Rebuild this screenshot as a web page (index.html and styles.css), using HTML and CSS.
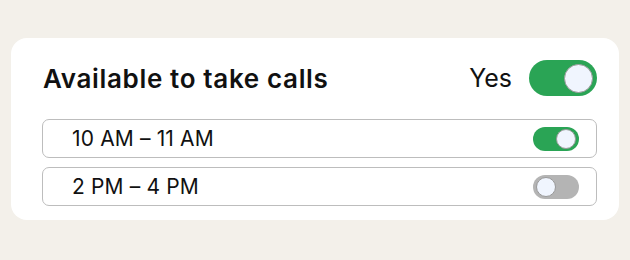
FILE: index.html
```html
<!DOCTYPE html>
<html>
<head>
<meta charset="utf-8">
<link rel="stylesheet" href="styles.css">
</head>
<body>
<div class="card">
  <div class="header">
    <h1 class="title">Available to take calls</h1>
    <div class="master">
      <span class="yes">Yes</span>
      <span class="toggle big on"><span class="knob"></span></span>
    </div>
  </div>
  <div class="slots">
    <div class="slot">
      <span class="slot-text">10 AM – 11 AM</span>
      <span class="toggle small on"><span class="knob"></span></span>
    </div>
    <div class="slot">
      <span class="slot-text">2 PM – 4 PM</span>
      <span class="toggle small off"><span class="knob"></span></span>
    </div>
  </div>
</div>
</body>
</html>
```
FILE: styles.css
```css
html, body {
  margin: 0;
  padding: 0;
  background: #f3f0ea;
  font-family: Inter, "Noto Sans", sans-serif;
  color: #111;
}
body {
  padding: 38px 11px 0 11px;
}
.card {
  background: #fff;
  border-radius: 16px;
  padding: 22px 22px 14px 31px;
  height: 182px;
  box-sizing: border-box;
}
.header {
  display: flex;
  align-items: center;
  justify-content: space-between;
  height: 36px;
}
.title {
  margin: 0 0 0 1px;
  font-size: 26px;
  font-weight: 600;
  letter-spacing: 0.65px;
}
.master {
  display: flex;
  align-items: center;
  gap: 17px;
}
.yes {
  font-size: 25px;
  font-weight: 400;
}
.toggle {
  display: flex;
  align-items: center;
  box-sizing: border-box;
  border-radius: 999px;
}
.toggle.on { background: #2aa455; justify-content: flex-end; }
.toggle.off { background: #b4b4b4; justify-content: flex-start; }
.knob {
  display: block;
  border-radius: 50%;
  background: #f0f5fe;
  box-sizing: border-box;
  border: 1px solid #999;
}
.toggle.big { width: 68px; height: 36px; padding: 0 4px; }
.toggle.big .knob { width: 29px; height: 29px; }
.toggle.small { width: 46px; height: 24px; padding: 0 3px; }
.toggle.small .knob { width: 20px; height: 20px; }
.slots {
  margin-top: 23px;
  display: flex;
  flex-direction: column;
  gap: 9px;
}
.slot {
  display: flex;
  align-items: center;
  justify-content: space-between;
  height: 39px;
  box-sizing: border-box;
  border: 1px solid #bdbdbd;
  border-radius: 7px;
  padding: 0 17px 0 29px;
}
.slot-text {
  font-size: 21px;
  font-weight: 400;
  letter-spacing: 0.15px;
}
```
